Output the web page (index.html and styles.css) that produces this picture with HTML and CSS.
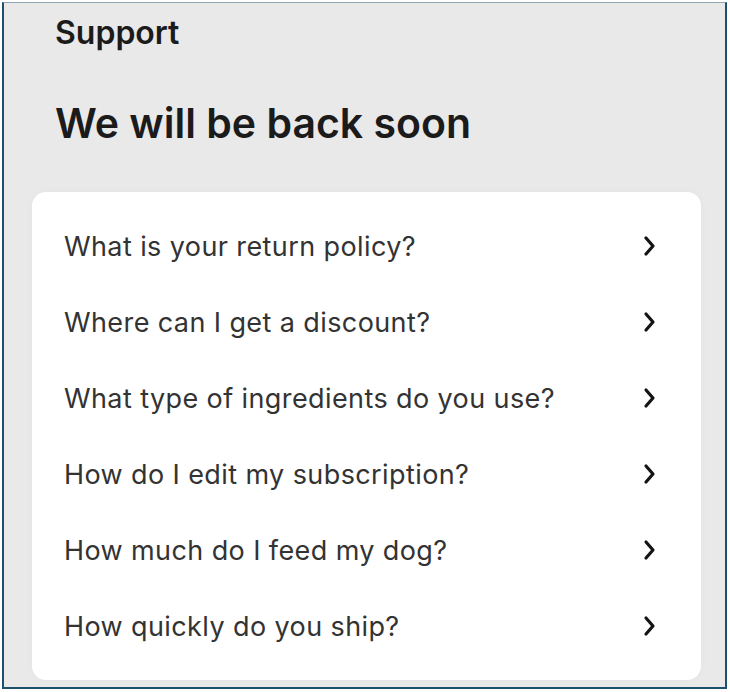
FILE: index.html
```html
<!DOCTYPE html>
<html>
   <head>
      <meta charset="UTF-8">
      <title>Support</title>
      <link rel="stylesheet" href="styles.css">
   </head>
   <body>
    <div class="frame">
      <p class="section-name">Support</p>
      <h1>We will be back soon</h1>
      <div class="faq-card">
        <a class="faq-row" href="#">
          <span>What is your return policy?</span>
          <svg class="chevron" viewBox="0 0 24 24"><polyline points="8,4 15,12 8,20" /></svg>
        </a>
        <a class="faq-row" href="#">
          <span>Where can I get a discount?</span>
          <svg class="chevron" viewBox="0 0 24 24"><polyline points="8,4 15,12 8,20" /></svg>
        </a>
        <a class="faq-row" href="#">
          <span>What type of ingredients do you use?</span>
          <svg class="chevron" viewBox="0 0 24 24"><polyline points="8,4 15,12 8,20" /></svg>
        </a>
        <a class="faq-row" href="#">
          <span>How do I edit my subscription?</span>
          <svg class="chevron" viewBox="0 0 24 24"><polyline points="8,4 15,12 8,20" /></svg>
        </a>
        <a class="faq-row" href="#">
          <span>How much do I feed my dog?</span>
          <svg class="chevron" viewBox="0 0 24 24"><polyline points="8,4 15,12 8,20" /></svg>
        </a>
        <a class="faq-row" href="#">
          <span>How quickly do you ship?</span>
          <svg class="chevron" viewBox="0 0 24 24"><polyline points="8,4 15,12 8,20" /></svg>
        </a>
      </div>
    </div>
  </body>
</html>
```

FILE: styles.css
```css
body {
margin: 0;
background-color: #ffffff;
font-family: Inter, 'Noto Sans', sans-serif;
}
.frame {
margin: 2px 3px 2px 2px;
height: 687px;
box-sizing: border-box;
background-color: #e9e9e9;
border-top: 1px solid #8fa3b1;
border-left: 2px solid #1d4f6e;
border-right: 2px solid #1d4f6e;
border-bottom: 2px solid #1d4f6e;
padding: 11px 24px 0 28px;
}
.section-name {
margin: 0 0 0 23px;
font-size: 32px;
line-height: 38px;
font-weight: 600;
color: #1b1b1b;
}
h1 {
margin: 47px 0 0 23px;
font-size: 41px;
line-height: 48px;
font-weight: 600;
color: #1b1b1b;
}
.faq-card {
margin-top: 45px;
background-color: #ffffff;
border-radius: 14px;
padding: 16px 0;
box-shadow: 0 0 8px rgba(0, 0, 0, 0.03);
}
.faq-row {
display: flex;
align-items: center;
justify-content: space-between;
height: 76px;
padding: 0 39px 0 32px;
font-size: 27px;
letter-spacing: 0.4px;
color: #333333;
text-decoration: none;
}
.chevron {
width: 24px;
height: 24px;
fill: none;
stroke: #141414;
stroke-width: 3.2;
stroke-linecap: round;
stroke-linejoin: round;
}
```
